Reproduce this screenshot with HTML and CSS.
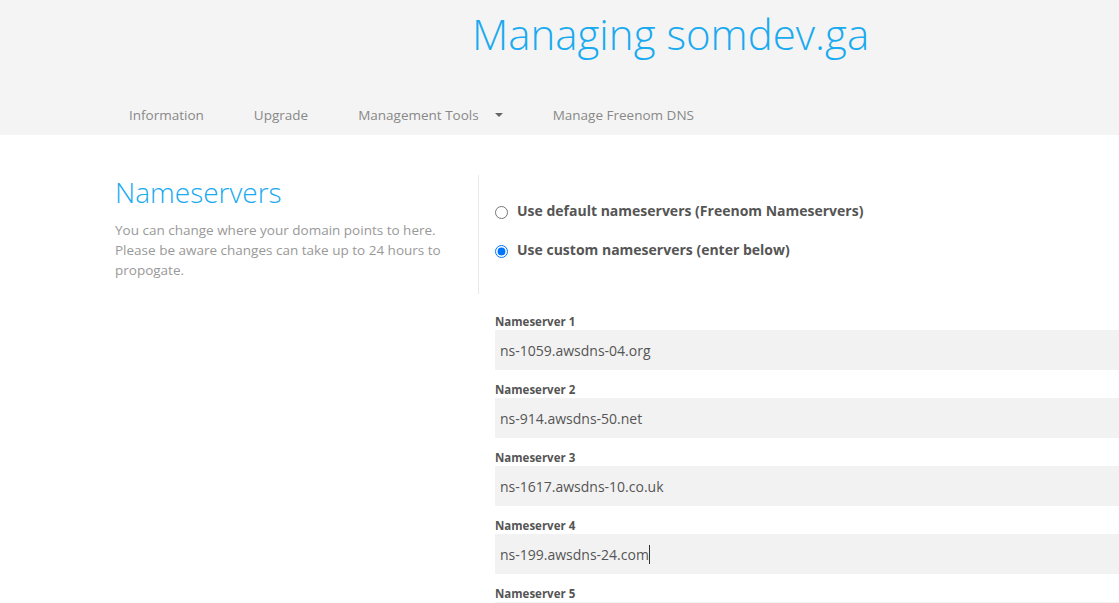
FILE: index.html
```html
<!DOCTYPE html>
<html>
<head>
<meta charset="utf-8">
<link rel="stylesheet" href="styles.css">
</head>
<body>
<header class="top">
  <h1 class="title">Managing somdev.ga</h1>
  <nav class="nav">
    <span class="nav-item">Information</span>
    <span class="nav-item">Upgrade</span>
    <span class="nav-item">Management Tools <span class="caret"></span></span>
    <span class="nav-item">Manage Freenom DNS</span>
  </nav>
</header>
<main class="main">
  <section class="intro">
    <div class="intro-text">
      <h2 class="section-title">Nameservers</h2>
      <p class="desc">You can change where your domain points to here. Please be aware changes can take up to 24 hours to propogate.</p>
    </div>
    <div class="options">
      <label class="option"><input type="radio" name="ns" class="radio"><span>Use default nameservers (Freenom Nameservers)</span></label>
      <label class="option"><input type="radio" name="ns" class="radio" checked><span>Use custom nameservers (enter below)</span></label>
    </div>
  </section>
  <section class="fields">
    <div class="field"><div class="field-label">Nameserver 1</div><div class="field-input">ns-1059.awsdns-04.org</div></div>
    <div class="field"><div class="field-label">Nameserver 2</div><div class="field-input">ns-914.awsdns-50.net</div></div>
    <div class="field"><div class="field-label">Nameserver 3</div><div class="field-input">ns-1617.awsdns-10.co.uk</div></div>
    <div class="field"><div class="field-label">Nameserver 4</div><div class="field-input">ns-199.awsdns-24.com<span class="cursor"></span></div></div>
    <div class="field"><div class="field-label">Nameserver 5</div><div class="field-input"></div></div>
  </section>
</main>
</body>
</html>
```

FILE: styles.css
```css
* { box-sizing: border-box; }
html, body { margin: 0; padding: 0; }
body {
  font-family: "Open Sans", "Liberation Sans", sans-serif;
  background: #fff;
  width: 1119px;
  height: 603px;
  overflow: hidden;
  color: #555;
}
.top {
  background: #f4f4f4;
  height: 135px;
  display: flex;
  flex-direction: column;
}
.title {
  margin: 0;
  padding: 6px 0 0 472px;
  font-weight: 300;
  font-size: 42px;
  line-height: 56px;
  color: #19aaf0;
  white-space: nowrap;
}
.nav {
  margin-top: 44px;
  padding-left: 129px;
  display: flex;
  font-size: 13.5px;
  color: #888;
}
.nav-item { margin-right: 50px; white-space: nowrap; display: flex; align-items: center; }
.caret {
  display: inline-block;
  margin-left: 16px;
  width: 0; height: 0;
  border-left: 4px solid transparent;
  border-right: 4px solid transparent;
  border-top: 4px solid #666;
}
.main { padding-left: 115px; }
.intro {
  display: flex;
  margin-top: 40px;
}
.intro-text {
  width: 364px;
  border-right: 1px solid #e8e8e8;
  height: 119px;
}
.section-title {
  margin: 0;
  font-weight: 300;
  font-size: 28px;
  line-height: 34px;
  color: #19aaf0;
}
.desc {
  margin: 11px 0 0;
  font-size: 13.5px;
  line-height: 20px;
  color: #999;
  width: 340px;
}
.options {
  padding: 26px 0 0 16px;
  display: flex;
  flex-direction: column;
  gap: 20px;
}
.option {
  display: flex;
  align-items: center;
  font-size: 14px;
  font-weight: 700;
  color: #555;
}
.radio { margin: 4px 9px 0 0; width: 13px; height: 13px; }
.fields {
  margin-left: 380px;
  margin-top: 19px;
}
.field { margin-bottom: 11px; }
.field-label {
  font-size: 11.5px;
  font-weight: 700;
  line-height: 17px;
  color: #555;
}
.field-input {
  width: 700px;
  height: 40px;
  background: #f2f2f2;
  padding-left: 5px;
  font-size: 14px;
  color: #555;
  display: flex;
  align-items: center;
}
.cursor { display: inline-block; width: 1px; height: 19px; background: #333; }
```
